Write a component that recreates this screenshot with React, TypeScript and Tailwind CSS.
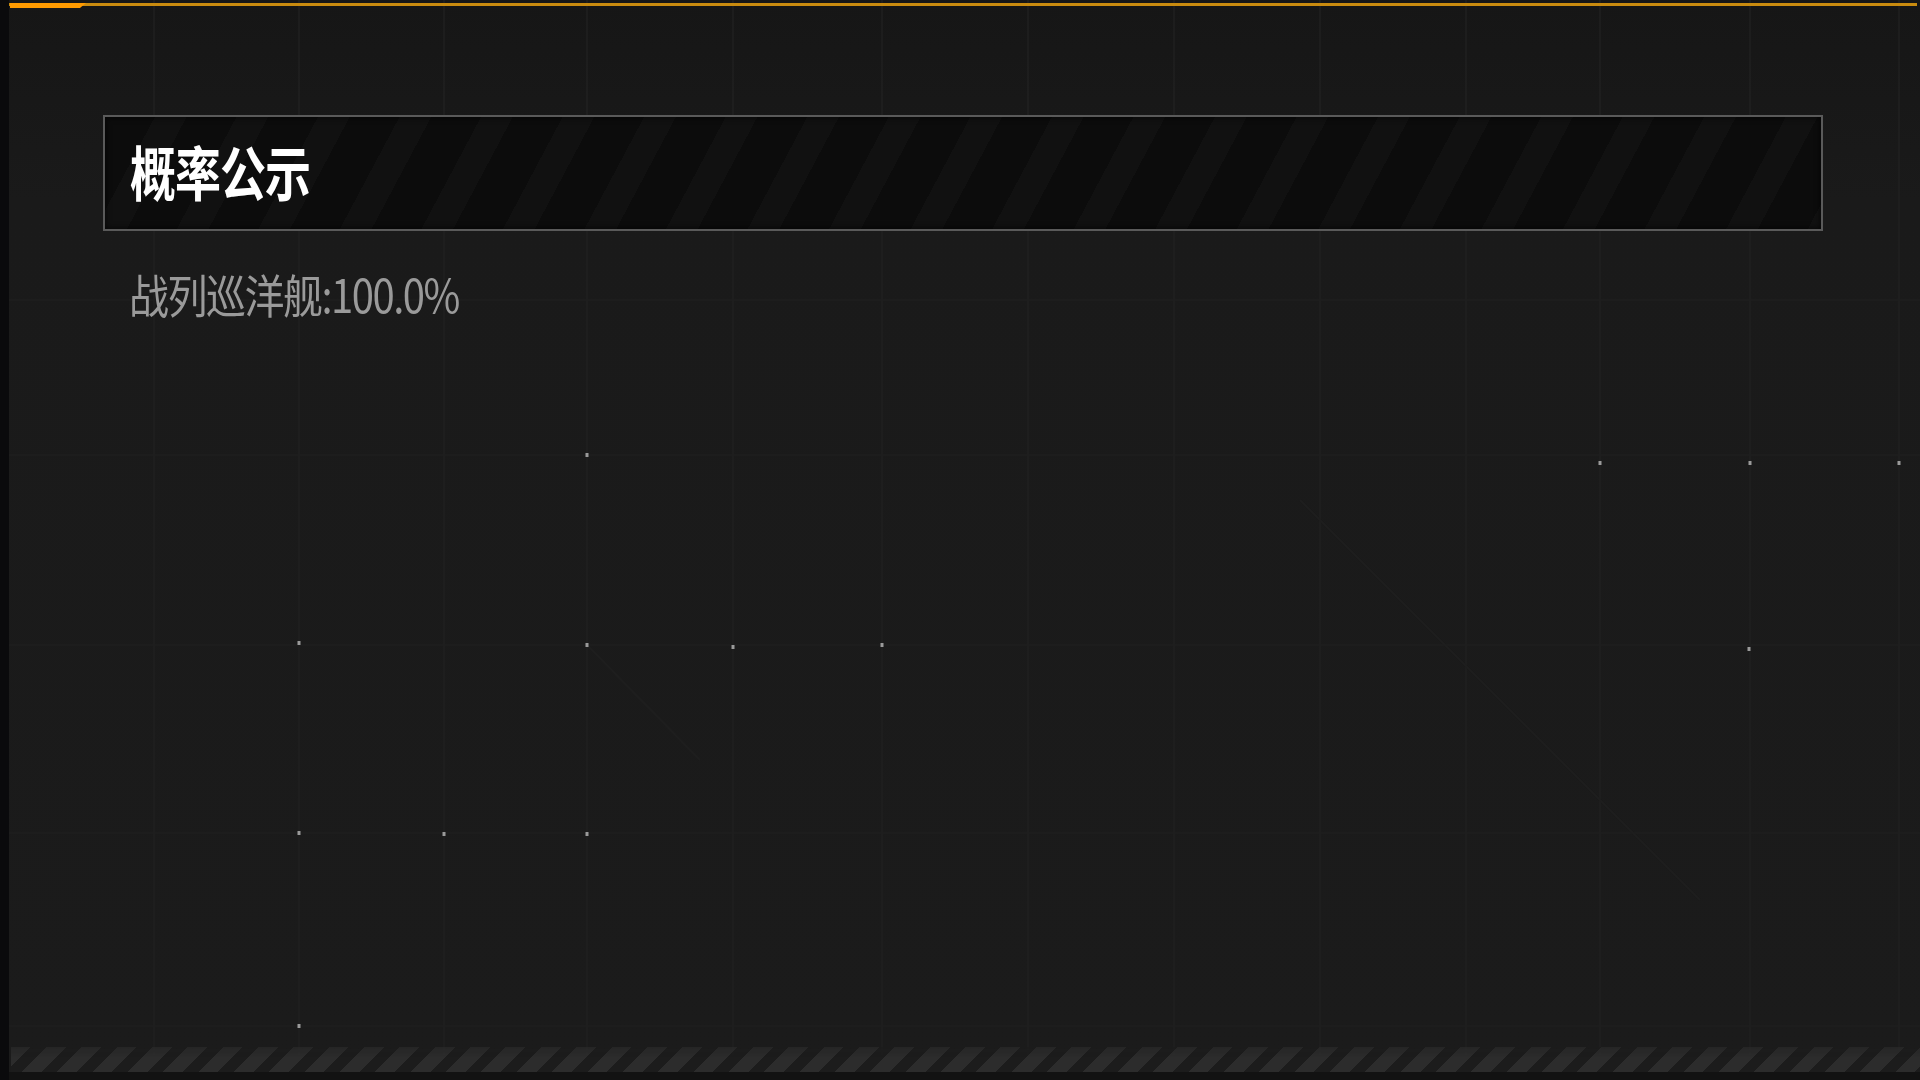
const gridX = [154, 299, 444, 587, 733, 882, 1028, 1174, 1320, 1466, 1600, 1750, 1899];
const gridY = [300, 455, 645, 833, 1026];

const dots: [number, number][] = [
  [587, 455],
  [1600, 463],
  [1750, 463],
  [1899, 463],
  [299, 643],
  [587, 645],
  [733, 647],
  [882, 645],
  [1749, 649],
  [299, 833],
  [444, 834],
  [587, 834],
  [299, 1026],
];

function Backdrop() {
  return (
    <svg
      className="pointer-events-none absolute inset-0"
      width="1920"
      height="1080"
      viewBox="0 0 1920 1080"
    >
      {gridX.map((x) => (
        <line key={"x" + x} x1={x} y1="0" x2={x} y2="1080" stroke="#202020" strokeWidth="1.5" />
      ))}
      {gridY.map((y) => (
        <line key={"y" + y} x1="0" y1={y} x2="1920" y2={y} stroke="#1f1f1f" strokeWidth="1.5" />
      ))}
      <line x1="1300" y1="500" x2="1700" y2="900" stroke="#1e1e1e" strokeWidth="2" />
      <line x1="587" y1="645" x2="700" y2="760" stroke="#1e1e1e" strokeWidth="2" />
      {dots.map(([x, y]) => (
        <rect key={x + "-" + y} x={x - 1.5} y={y - 2} width="3" height="4" fill="#9a9a9a" />
      ))}
    </svg>
  );
}

export default function App() {
  return (
    <div className="relative flex h-[1080px] w-[1920px] overflow-hidden bg-[linear-gradient(to_bottom,#161616_0px,#1a1a1a_200px,#1b1b1b_100%)] font-['Noto_Sans_CJK_SC','Noto_Sans',sans-serif]">
      <Backdrop />
      <div className="relative w-[9px] shrink-0 bg-[#0a0a0c]" />
      <div className="relative flex flex-1 flex-col">
        {/* top accent line */}
        <div className="relative h-[9px]">
          <div className="absolute left-0 right-[3px] top-[3px] h-[3px] bg-[#c98b0f]" />
          <div className="absolute left-[1px] top-[3px] h-[5px] w-[76px] bg-[#ff9a00] [clip-path:polygon(0_0,100%_0,92%_100%,0_100%)]" />
        </div>

        <div className="flex flex-1 flex-col px-[94px] pt-[106px]">
          <div className="flex h-[116px] w-[1720px] items-center border-2 border-[#5a5a5a] bg-[repeating-linear-gradient(118deg,#0c0c0c_0px,#0c0c0c_44px,#111111_44px,#111111_72px)] pb-[6px] pl-[25px] shadow-[inset_0_0_6px_rgba(0,0,0,0.8)]">
            <span className="inline-block scale-y-[1.28] text-[46px] font-bold leading-none tracking-[-1px] text-white">
              概率公示
            </span>
          </div>
          <div className="mt-[38px] pl-[26px]">
            <span className="inline-block scale-y-[1.15] text-[40px] leading-[48px] tracking-[-1.5px] text-[#9a9a9a]">
              战列巡洋舰:100.0%
            </span>
          </div>
        </div>

        {/* hazard stripes */}
        <div className="ml-[2px] h-[25px] bg-[repeating-linear-gradient(135deg,#2c2c2c_0px,#2c2c2c_14px,#1c1c1c_14px,#1c1c1c_25px)] [mask-image:linear-gradient(to_bottom,rgba(0,0,0,0.6),black_40%)]" />
        <div className="h-[8px] bg-[#121212]" />
      </div>
    </div>
  );
}
